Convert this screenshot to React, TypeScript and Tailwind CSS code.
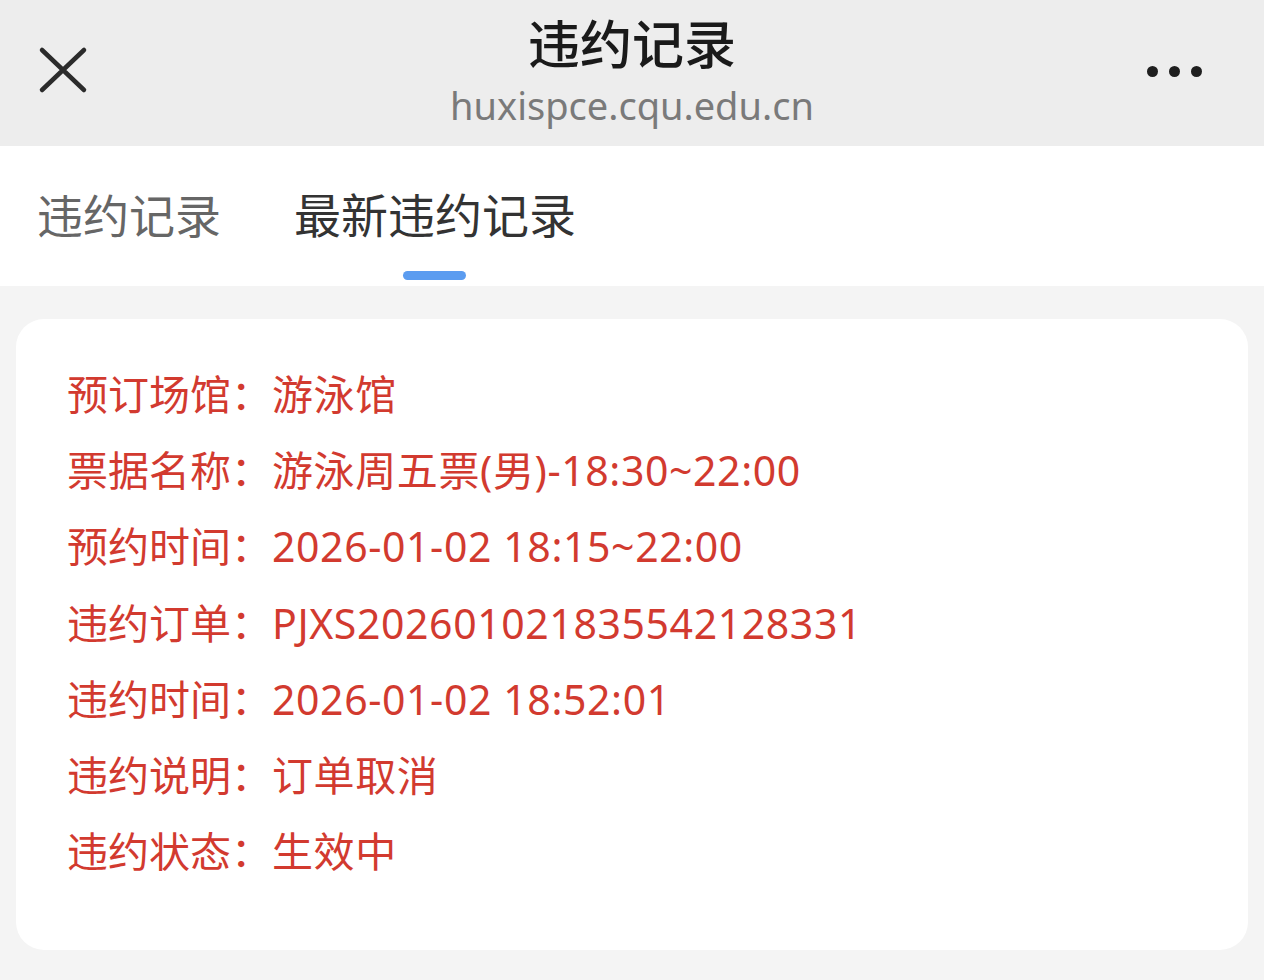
const rows = [
  { label: '预订场馆', value: '游泳馆' },
  { label: '票据名称', value: '游泳周五票(男)-18:30~22:00' },
  { label: '预约时间', value: '2026-01-02 18:15~22:00' },
  { label: '违约订单', value: 'PJXS202601021835542128331' },
  { label: '违约时间', value: '2026-01-02 18:52:01' },
  { label: '违约说明', value: '订单取消' },
  { label: '违约状态', value: '生效中' },
]

export default function App() {
  return (
    <div
      className="min-h-[980px] w-[1264px] bg-[#f4f4f4]"
      style={{ fontFamily: '"Noto Sans", "Noto Sans CJK SC", sans-serif' }}
    >
      {/* 顶部导航 */}
      <div className="grid h-[146px] grid-cols-[1fr_auto_1fr] items-center bg-[#ededed] px-[38px]">
        <svg width="50" height="50" viewBox="0 0 50 50" className="-mt-[4px]">
          <path d="M4 4 L46 44 M46 4 L4 44" stroke="#2b2b2b" strokeWidth="4.5" strokeLinecap="round" />
        </svg>
        <div className="-mt-[1px] flex flex-col items-center">
          <div className="-mt-[3px] text-[52px] leading-[56px] font-medium text-[#1a1a1a]">违约记录</div>
          <div className="mt-[11px] text-[38px] leading-[44px] text-[#7a7a7a]">huxispce.cqu.edu.cn</div>
        </div>
        <div className="-mt-[4px] flex items-center justify-end gap-[11px] pr-[24px]">
          <span className="h-[11px] w-[11px] rounded-full bg-[#1f1f1f]" />
          <span className="h-[11px] w-[11px] rounded-full bg-[#1f1f1f]" />
          <span className="h-[11px] w-[11px] rounded-full bg-[#1f1f1f]" />
        </div>
      </div>

      {/* 标签栏 */}
      <div className="flex h-[140px] gap-[73px] bg-white pl-[37px]">
        <div className="flex h-full items-center pb-[2px] text-[46px] text-[#666666]">违约记录</div>
        <div className="relative flex h-full items-center pb-[2px] text-[47px] text-[#333333]">
          最新违约记录
          <span className="absolute bottom-[6px] left-[109px] h-[9px] w-[63px] rounded-full bg-[#5b9cf0]" />
        </div>
      </div>

      {/* 记录卡片 */}
      <div className="px-[16px] pt-[33px]">
        <div className="rounded-[28px] bg-white pb-[61px] pl-[51px] pt-[37px]">
          {rows.map((r) => (
            <div key={r.label} className="h-[76.2px] leading-[76px] text-[41px] text-[#d23a2f] whitespace-nowrap">
              {r.label}：<span className="tracking-[0.6px]">{r.value}</span>
            </div>
          ))}
        </div>
      </div>
    </div>
  )
}
